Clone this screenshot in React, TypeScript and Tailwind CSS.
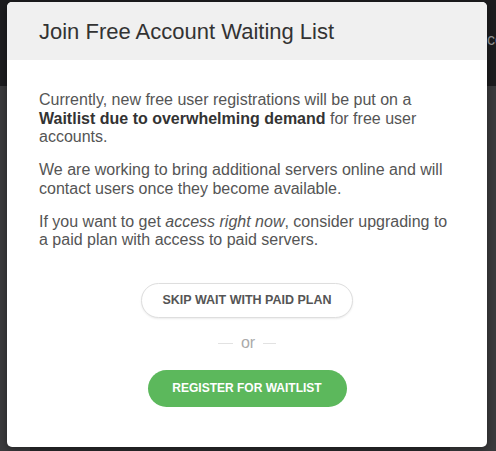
import React from 'react';

const App: React.FC = () => {
  return (
    <div
      className="relative w-[496px] h-[451px] overflow-hidden bg-[#3a3a3c]"
      style={{ fontFamily: '"Liberation Sans", Arial, sans-serif' }}
    >
      {/* Page behind the overlay */}
      <div className="flex flex-col h-full">
        <div className="h-[86px] bg-[#1d1d1f] flex items-center justify-end">
          <span className="text-[16px] text-[#9a9a9a] mr-[-8px] mt-[-6px]">co</span>
        </div>
        <div className="flex-1 bg-[#3b3b3d] flex items-end pl-[30px] pb-0">
          <div className="h-[4px] w-[420px] bg-[#2a2a2c]" />
        </div>
      </div>

      {/* Modal */}
      <div className="absolute left-[7px] top-[2px] w-[480px] h-[445px] bg-white rounded-[5px] overflow-hidden shadow-[0_2px_8px_rgba(0,0,0,0.4)]">
        <div className="h-[58px] bg-[#f0f0f0] flex items-center px-[32px]">
          <h2 className="text-[22px] leading-[26px] text-[#333] font-normal pt-[1px]">Join Free Account Waiting List</h2>
        </div>

        <div className="px-[32px] pt-[31px] text-[16px] leading-[18.5px] text-[#555]">
          <p className="mb-[14.5px]">
            Currently, new free user registrations will be put on a{' '}
            <strong className="font-bold text-[#333]">Waitlist due to overwhelming demand</strong> for free user
            accounts.
          </p>
          <p className="mb-[14.5px]">
            We are working to bring additional servers online and will contact users once they become available.
          </p>
          <p>
            If you want to get <em>access right now</em>, consider upgrading to a paid plan with access to paid
            servers.
          </p>
        </div>

        <div className="flex flex-col items-center pt-[33px]">
          <button className="w-[212px] h-[35px] rounded-full border border-[#dedede] bg-white shadow-[0_1px_2px_rgba(0,0,0,0.08)] text-[12.5px] font-bold text-[#555] uppercase">
            Skip wait with paid plan
          </button>

          <div className="flex items-center gap-[8px] mt-[16px] text-[#aaa] text-[16px] leading-[18px]">
            <span className="w-[15px] h-px bg-[#e2e2e2]" />
            <span className="pb-[2px]">or</span>
            <span className="w-[13px] h-px bg-[#e2e2e2]" />
          </div>

          <button className="mt-[16px] w-[199px] h-[37px] rounded-full bg-[#5cb85c] text-[12px] font-bold text-white uppercase">
            Register for waitlist
          </button>
        </div>
      </div>
    </div>
  );
};

export default App;
